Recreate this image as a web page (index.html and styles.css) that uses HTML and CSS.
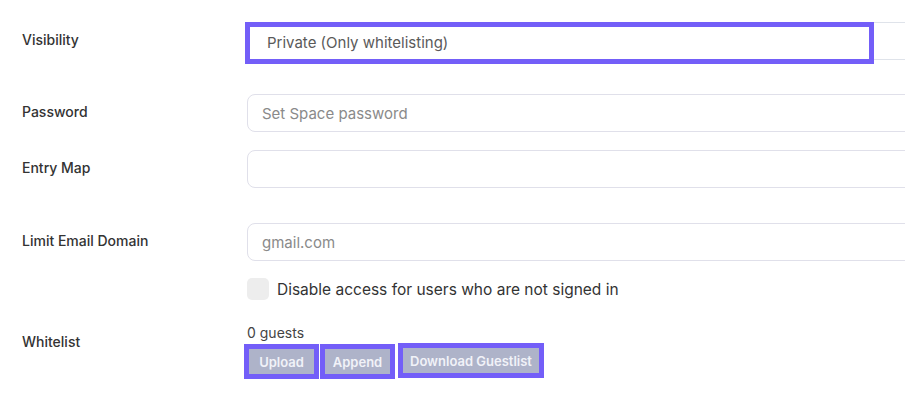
FILE: index.html
```html
<!DOCTYPE html>
<html>
<head>
<meta charset="utf-8">
<link rel="stylesheet" href="styles.css">
</head>
<body>
<div class="form">
  <div class="row row-vis">
    <div class="label">Visibility</div>
    <div class="field">
      <div class="select">
        <div class="highlight">Private (Only whitelisting)</div>
      </div>
    </div>
  </div>
  <div class="row row-pass">
    <div class="label">Password</div>
    <div class="field"><div class="input placeholder">Set Space password</div></div>
  </div>
  <div class="row row-map">
    <div class="label">Entry Map</div>
    <div class="field"><div class="input"></div></div>
  </div>
  <div class="row row-email">
    <div class="label">Limit Email Domain</div>
    <div class="field"><div class="input placeholder">gmail.com</div></div>
  </div>
  <div class="row row-check">
    <div class="label"></div>
    <div class="field check-line">
      <span class="checkbox"></span>
      <span class="check-text">Disable access for users who are not signed in</span>
    </div>
  </div>
  <div class="row row-white">
    <div class="label label-white">Whitelist</div>
    <div class="field white-field">
      <div class="guests">0 guests</div>
      <div class="buttons">
        <span class="btn">Upload</span>
        <span class="btn">Append</span>
        <span class="btn btn-dl">Download Guestlist</span>
      </div>
    </div>
  </div>
</div>
</body>
</html>
```
FILE: styles.css
```css
html, body {
  margin: 0;
  padding: 0;
  background: #ffffff;
  overflow: hidden;
  width: 905px;
  height: 400px;
}
body {
  font-family: Inter, "Noto Sans", sans-serif;
  color: #333333;
}
.form {
  display: flex;
  flex-direction: column;
  padding: 22px 0 0 22px;
}
.row {
  display: flex;
  align-items: center;
}
.label {
  width: 225px;
  flex: none;
  font-size: 14px;
  font-weight: 500;
  color: #333333;
  padding-bottom: 3px;
}
.field {
  width: 700px;
  flex: none;
}
.row-pass { margin-top: 34px; }
.row-map { margin-top: 18px; }
.row-email { margin-top: 35px; }
.row-check { margin-top: 17px; }
.row-white { margin-top: 22px; align-items: flex-start; }
.select {
  position: relative;
  height: 36px;
  border-top: 1px solid #dfe3ea;
  border-bottom: 1px solid #dfe3ea;
}
.highlight {
  position: absolute;
  left: -2px;
  top: -1px;
  width: 602px;
  height: 30px;
  border: 5px solid #735ef8;
  background: #ffffff;
  display: flex;
  align-items: center;
  padding-left: 17px;
  padding-bottom: 2px;
  box-sizing: content-box;
  font-size: 15px;
  color: #5a5a5a;
}
.input {
  height: 36px;
  border: 1px solid #e0e0ea;
  border-radius: 8px;
  box-sizing: content-box;
  display: flex;
  align-items: center;
  padding-left: 14px;
  font-size: 15px;
}
.placeholder { color: #8a8a8a; }
.check-line {
  display: flex;
  align-items: center;
  gap: 8px;
}
.checkbox {
  width: 22px;
  height: 22px;
  border-radius: 5px;
  background: #ededed;
  flex: none;
}
.check-text {
  font-size: 15.5px;
  color: #333333;
}
.label-white { padding-top: 11px; }
.white-field {
  display: flex;
  flex-direction: column;
}
.guests {
  font-size: 14px;
  color: #444444;
  line-height: 18px;
  margin-top: 2px;
}
.buttons {
  display: flex;
  align-items: flex-start;
  margin-top: 2px;
  margin-left: -3px;
}
.btn {
  display: inline-flex;
  align-items: center;
  justify-content: center;
  width: 65px;
  height: 25px;
  background: #aeb3c9;
  color: #f1f2f8;
  font-size: 13px;
  font-weight: 600;
  outline: 5px solid #735ef8;
  margin-left: 5px;
  margin-top: 5px;
}
.btn + .btn { margin-left: 11px; }
.btn-dl {
  width: 136px;
  margin-top: 4px;
  box-shadow: 0 3px 3px rgba(0, 0, 0, 0.12);
}
.btn + .btn-dl { margin-left: 13px; }
```
